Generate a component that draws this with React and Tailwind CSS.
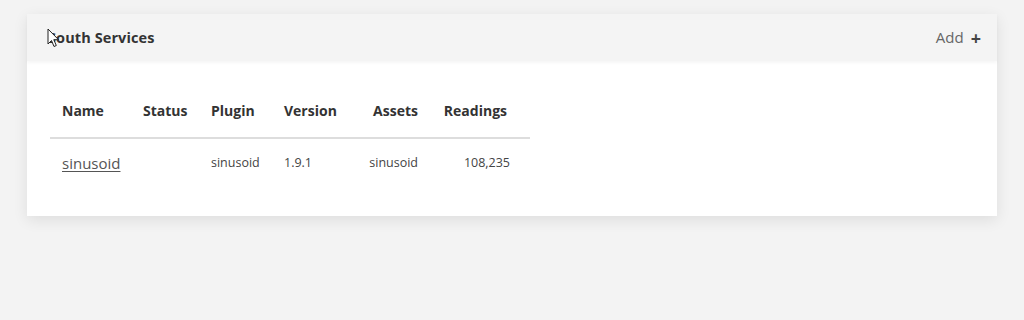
import React from 'react';

const services = [
    { name: 'sinusoid', status: '', plugin: 'sinusoid', version: '1.9.1', assets: 'sinusoid', readings: '108,235' }
];

function Cursor() {
    return (
        <svg className="absolute left-[47px] top-[28px]" width="13" height="20" viewBox="0 0 13 20">
            <path d="M1 1 L1 16 L4.5 12.5 L7 18.5 L9.3 17.5 L6.8 11.7 L11.5 11.7 Z" fill="#fff" stroke="#222" strokeWidth="1" strokeLinejoin="round" />
        </svg>
    );
}

function App() {
    return (
        <div className="w-[1024px] h-[320px] bg-[#f3f3f3] pt-[14px] px-[27px] relative" style={{ fontFamily: '"Open Sans", "Noto Sans", sans-serif' }}>
            <div className="bg-white shadow-[0_4px_14px_rgba(0,0,0,0.09)]">
                <div className="h-[47px] bg-[#f4f4f4] flex items-center justify-between pl-[21px] pr-[16px] shadow-[0_2px_3px_rgba(0,0,0,0.04)]">
                    <h2 className="text-[14.5px] font-bold text-[#333] tracking-[0.1px]">South Services</h2>
                    <div className="flex items-center gap-[7px]">
                        <span className="text-[15px] text-[#666]">Add</span>
                        <span className="text-[18px] font-bold text-[#444] leading-none">+</span>
                    </div>
                </div>
                <div className="pl-[23px] pt-[23px] pb-[28px]">
                    <table className="border-collapse w-[480px]">
                        <thead>
                            <tr className="border-b-2 border-[#dddddd] text-[14px] font-bold text-[#333]">
                                <th className="w-[81px] text-left pl-[12px] pt-[16px] pb-[16px]">Name</th>
                                <th className="w-[68px] text-left pl-[12px] pt-[16px] pb-[16px]">Status</th>
                                <th className="w-[73px] text-left pl-[12px] pt-[16px] pb-[16px]">Plugin</th>
                                <th className="w-[78px] text-left pl-[12px] pt-[16px] pb-[16px]">Version</th>
                                <th className="w-[80px] text-right pr-[12px] pt-[16px] pb-[16px]">Assets</th>
                                <th className="text-right pr-[23px] pt-[16px] pb-[16px]">Readings</th>
                            </tr>
                        </thead>
                        <tbody>
                            {services.map((s) => (
                                <tr key={s.name} className="h-[50px] text-[12.5px] text-[#444]">
                                    <td className="pl-[12px] align-middle">
                                        <a href="#" className="text-[15px] text-[#555] underline underline-offset-2">{s.name}</a>
                                    </td>
                                    <td className="pl-[12px] align-middle">{s.status}</td>
                                    <td className="pl-[12px] align-middle">{s.plugin}</td>
                                    <td className="pl-[12px] align-middle">{s.version}</td>
                                    <td className="text-right pr-[12px] align-middle">{s.assets}</td>
                                    <td className="text-right pr-[20px] align-middle">{s.readings}</td>
                                </tr>
                            ))}
                        </tbody>
                    </table>
                </div>
            </div>
            <Cursor />
        </div>
    );
}

export default App;
